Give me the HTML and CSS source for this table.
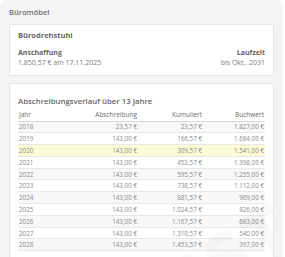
FILE: index.html
```html
<!DOCTYPE html>
<html lang="de">
<head>
<meta charset="utf-8">
<link rel="stylesheet" href="styles.css">
</head>
<body>
<div class="panel">
  <div class="panel-title">Büromöbel</div>
  <div class="card">
    <div class="card-title">Bürodrehstuhl</div>
    <div class="facts">
      <div class="fact">
        <div class="label">Anschaffung</div>
        <div class="value">1.850,57 € am 17.11.2025</div>
      </div>
      <div class="fact right">
        <div class="label">Laufzeit</div>
        <div class="value">bis Okt.. 2031</div>
      </div>
    </div>
  </div>
  <div class="card table-card">
    <div class="card-title">Abschreibungsverlauf über 13 Jahre</div>
    <div class="table">
      <div class="row head"><span>Jahr</span><span>Abschreibung</span><span>Kumuliert</span><span>Buchwert</span></div>
      <div class="row"><span>2018</span><span>23,57 €</span><span>23,57 €</span><span>1.827,00 €</span></div>
      <div class="row"><span>2019</span><span>143,00 €</span><span>166,57 €</span><span>1.684,00 €</span></div>
      <div class="row current"><span>2020</span><span>143,00 €</span><span>309,57 €</span><span>1.541,00 €</span></div>
      <div class="row"><span>2021</span><span>143,00 €</span><span>452,57 €</span><span>1.398,00 €</span></div>
      <div class="row"><span>2022</span><span>143,00 €</span><span>595,57 €</span><span>1.255,00 €</span></div>
      <div class="row"><span>2023</span><span>143,00 €</span><span>738,57 €</span><span>1.112,00 €</span></div>
      <div class="row"><span>2024</span><span>143,00 €</span><span>881,57 €</span><span>969,00 €</span></div>
      <div class="row"><span>2025</span><span>143,00 €</span><span>1.024,57 €</span><span>826,00 €</span></div>
      <div class="row"><span>2026</span><span>143,00 €</span><span>1.167,57 €</span><span>683,00 €</span></div>
      <div class="row"><span>2027</span><span>143,00 €</span><span>1.310,57 €</span><span>540,00 €</span></div>
      <div class="row"><span>2028</span><span>143,00 €</span><span>1.453,57 €</span><span>397,00 €</span></div>
    </div>
    <div class="watermark">MUSTER</div>
  </div>
</div>
</body>
</html>
```
FILE: styles.css
```css
html, body {
  margin: 0;
  padding: 0;
  background: #ffffff;
  font-family: "Open Sans", "Liberation Sans", sans-serif;
}
body {
  width: 285px;
  height: 257px;
  overflow: hidden;
}
.panel {
  width: 283px;
  height: 257px;
  box-sizing: border-box;
  background: #f4f4f4;
  border-radius: 8px 8px 0 0;
  padding: 7px 9px 0 9px;
  display: flex;
  flex-direction: column;
  gap: 6px;
  overflow: hidden;
}
.panel-title {
  font-size: 7.5px;
  font-weight: 600;
  color: #6e6e6e;
  line-height: 11px;
}
.card {
  background: #ffffff;
  border: 1px solid #e6e6e6;
  padding: 5px 8px 7px 8px;
  position: relative;
  overflow: hidden;
  flex-shrink: 0;
}
.card-title {
  font-size: 7.5px;
  font-weight: 700;
  color: #666666;
  line-height: 11px;
}
.facts {
  display: flex;
  justify-content: space-between;
  margin-top: 7px;
}
.fact.right { text-align: right; }
.label {
  font-size: 7px;
  font-weight: 700;
  color: #666666;
  line-height: 10px;
}
.value {
  font-size: 7px;
  color: #7a7a7a;
  line-height: 10px;
}
.card + .card { margin-top: 1px; }
.table-card {
  padding-top: 9px;
  padding-bottom: 6px;
}
.table-card .card-title {
  font-size: 7.8px;
  font-weight: 600;
  line-height: 12px;
  margin-top: 2px;
  margin-bottom: 1.5px;
}
.table {
  display: flex;
  flex-direction: column;
}
.row {
  display: grid;
  grid-template-columns: 56px 64px 65px 1fr;
  height: 11.8px;
  align-items: center;
  font-size: 6.3px;
  color: #8a8a8a;
  border-bottom: 1px solid #e8e8e8;
  box-sizing: border-box;
}
.row span { text-align: right; padding-right: 1px; }
.row span:first-child { text-align: left; padding-left: 1px; }
.row:nth-child(even) { background: #f8f8f8; }
.row.head {
  background: #ffffff;
  color: #6a6a6a;
  font-size: 6.5px;
  height: 13px;
  border-bottom: 1px solid #d8d8d8;
}
.row.current { background: #fdfbd6; }
.watermark {
  position: absolute;
  left: 70px;
  top: 120px;
  font-size: 66px;
  font-weight: 800;
  letter-spacing: 6px;
  color: rgba(0, 0, 0, 0.025);
  transform: rotate(-32deg);
  pointer-events: none;
}
```
